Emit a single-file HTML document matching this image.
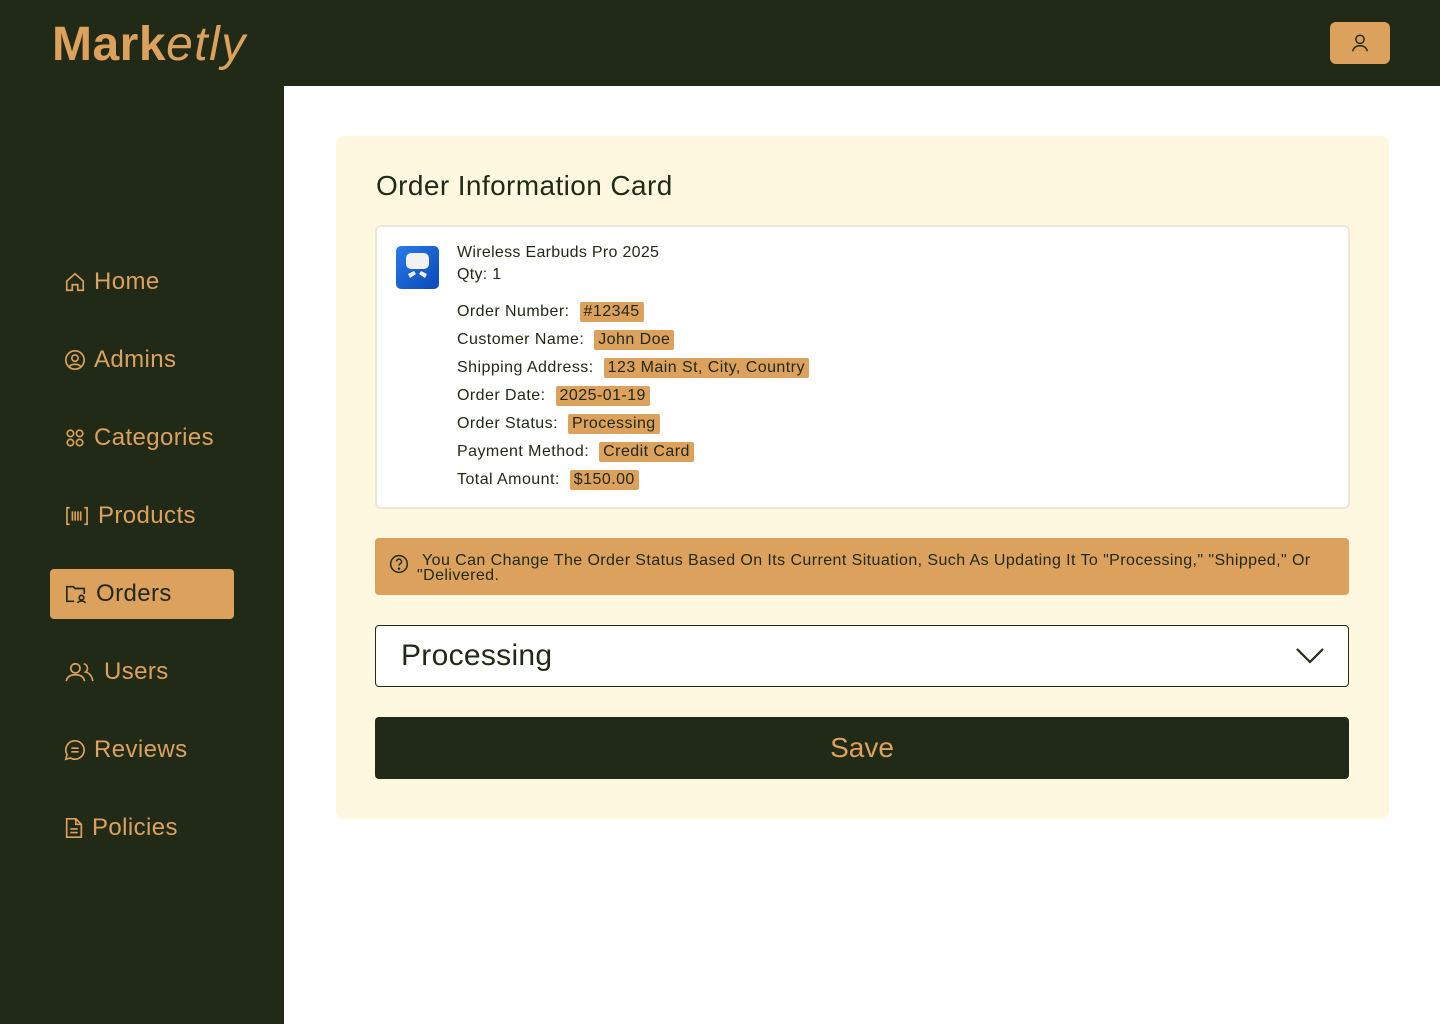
<!DOCTYPE html>
<html><head><meta charset="utf-8"><style>
*{margin:0;padding:0;box-sizing:border-box}
body{width:1440px;height:1024px;background:#fff;font-family:"Liberation Sans",sans-serif;position:relative;overflow:hidden;color:#212a16}
.top{position:absolute;left:0;top:0;width:1440px;height:86px;background:#212a16}
.logo{position:absolute;left:52px;top:17px;font-size:48px;color:#dda15e;letter-spacing:0.5px}
.logo b{font-weight:bold}.logo i{font-weight:normal;letter-spacing:1.5px}
.ub{position:absolute;left:1330px;top:22px;width:60px;height:42px;background:#dda15e;border-radius:6px;display:flex;align-items:center;justify-content:center}
.side{position:absolute;left:0;top:86px;width:284px;height:938px;background:#212a16}
.nav{position:absolute;left:50px;width:184px;height:50px;display:flex;align-items:center;padding-left:14px;font-size:24px;color:#dda15e;gap:8px;letter-spacing:0.4px}
.nav.act{background:#dda15e;color:#212a16;border-radius:4px}
.nav svg{flex:none}
.card{position:absolute;left:336px;top:136px;width:1053px;height:683px;background:#fef8e1;border-radius:8px}
h1{position:absolute;left:40px;top:34px;font-size:28px;font-weight:normal;color:#212a16;letter-spacing:0.4px}
.inner{position:absolute;left:39px;top:89px;width:975px;height:284px;background:#fff;border:2px solid #ece8d8;border-radius:6px}
.img{position:absolute;left:19px;top:19px;width:43px;height:43px;border-radius:5px;background:linear-gradient(135deg,#2a7be8,#0a48b8)}
.t{position:absolute;left:80px;font-size:16px;letter-spacing:0.3px}
.row{position:absolute;left:80px;font-size:16px;height:22px;display:flex;align-items:center;letter-spacing:0.45px}
.tag{background:#dda15e;padding:0 4px;border-radius:2px;margin-left:10px;line-height:20px}
.alert{position:absolute;left:39px;top:402px;width:974px;height:57px;background:#dda15e;border-radius:4px;font-size:16px;line-height:15px;padding:15px 0 0 47px;letter-spacing:0.42px}
.alert svg{position:absolute;left:14px;top:16px}
.sel{position:absolute;left:39px;top:489px;width:974px;height:62px;background:#fff;border:1px solid #212a16;border-radius:4px;font-size:30px;padding:13px 0 0 25px;letter-spacing:0.3px}
.sel svg{position:absolute;right:24px;top:21px}
.save{position:absolute;left:39px;top:581px;width:974px;height:62px;background:#212a16;border-radius:4px;color:#dda15e;font-size:28px;text-align:center;line-height:62px}
</style></head><body>
<div class="top"><div class="logo"><b>Mark</b><i>etly</i></div>
<div class="ub"><svg width="22" height="22" viewBox="0 0 24 24" fill="none" stroke="#212a16" stroke-width="1.6"><circle cx="12" cy="8" r="4.5"/><path d="M4 21c1-4 4-6 8-6s7 2 8 6"/></svg></div></div>
<div class="side"></div>
<div class="nav" style="top:257px"><svg width="22" height="22" viewBox="0 0 24 24" fill="none" stroke="#dda15e" stroke-width="1.8"><path d="M3 11l9-8 9 8v10h-6v-6h-6v6H3z"/></svg>Home</div>
<div class="nav" style="top:335px"><svg width="22" height="22" viewBox="0 0 24 24" fill="none" stroke="#dda15e" stroke-width="1.8"><circle cx="12" cy="12" r="10"/><circle cx="12" cy="10" r="3.5"/><path d="M6 19c2-3 10-3 12 0"/></svg>Admins</div>
<div class="nav" style="top:413px"><svg width="22" height="22" viewBox="0 0 24 24" fill="none" stroke="#dda15e" stroke-width="1.8"><circle cx="7" cy="7" r="3.5"/><circle cx="17" cy="7" r="3.5"/><circle cx="7" cy="17" r="3.5"/><circle cx="17" cy="17" r="3.5"/></svg>Categories</div>
<div class="nav" style="top:491px"><svg width="26" height="22" viewBox="0 0 26 24" fill="none" stroke="#dda15e" stroke-width="1.8"><path d="M5 3H2v18h3M21 3h3v18h-3M8 7v10M11 7v10M14 7v10M17 7v10"/></svg>Products</div>
<div class="nav act" style="top:569px"><svg width="24" height="22" viewBox="0 0 24 24" fill="none" stroke="#212a16" stroke-width="1.8"><path d="M10 20H2V4h7l2 2h10v6"/><circle cx="18" cy="16" r="2.5"/><path d="M14 22c0-3 8-3 8 0"/></svg>Orders</div>
<div class="nav" style="top:647px"><svg width="32" height="22" viewBox="0 0 32 24" fill="none" stroke="#dda15e" stroke-width="1.8"><circle cx="11" cy="8" r="5"/><path d="M1 22c1-5 5-7 10-7s9 2 10 7M20 3a5 5 0 0 1 2 9c4 1 7 4 8 10"/></svg>Users</div>
<div class="nav" style="top:725px"><svg width="22" height="22" viewBox="0 0 24 24" fill="none" stroke="#dda15e" stroke-width="1.8"><path d="M12 2a10 10 0 1 1-5 18.7L2 22l1.3-5A10 10 0 0 1 12 2z"/><path d="M8 10h8M8 14h8"/></svg>Reviews</div>
<div class="nav" style="top:803px"><svg width="20" height="22" viewBox="0 0 20 24" fill="none" stroke="#dda15e" stroke-width="1.8"><path d="M2 2h10l6 6v14H2z"/><path d="M12 2v6h6M6 13h8M6 17h8"/></svg>Policies</div>
<div class="card">
<h1>Order Information Card</h1>
<div class="inner">
<div class="img"><svg width="43" height="43" viewBox="0 0 43 43"><rect x="10" y="7" width="23" height="16" rx="5" fill="#f2f2f2"/><path d="M12 28l6 -3 2 3-6 4zM31 28l-6-3-2 3 6 4z" fill="#eee"/></svg></div>
<div class="t" style="top:17px">Wireless Earbuds Pro 2025</div>
<div class="t" style="top:39px">Qty: 1</div>
<div class="row" style="top:74px">Order Number:<span class="tag">#12345</span></div>
<div class="row" style="top:102px">Customer Name:<span class="tag">John Doe</span></div>
<div class="row" style="top:130px">Shipping Address:<span class="tag">123 Main St, City, Country</span></div>
<div class="row" style="top:158px">Order Date:<span class="tag">2025-01-19</span></div>
<div class="row" style="top:186px">Order Status:<span class="tag">Processing</span></div>
<div class="row" style="top:214px">Payment Method:<span class="tag">Credit Card</span></div>
<div class="row" style="top:242px">Total Amount:<span class="tag">$150.00</span></div>
</div>
<div class="alert"><svg width="20" height="20" viewBox="0 0 24 24" fill="none" stroke="#212a16" stroke-width="1.8"><circle cx="12" cy="12" r="10"/><path d="M9 9a3 3 0 1 1 4 3c-1 .5-1 1-1 2"/><circle cx="12" cy="17.5" r=".6" fill="#212a16"/></svg>You Can Change The Order Status Based On Its Current Situation, Such As Updating It To "Processing," "Shipped," Or<br><span style="margin-left:-5px">"Delivered.</span></div>
<div class="sel">Processing<svg width="28" height="18" viewBox="0 0 28 18" fill="none" stroke="#212a16" stroke-width="2.2"><path d="M1 2l13 13L27 2"/></svg></div>
<div class="save">Save</div>
</div>
</body></html>
